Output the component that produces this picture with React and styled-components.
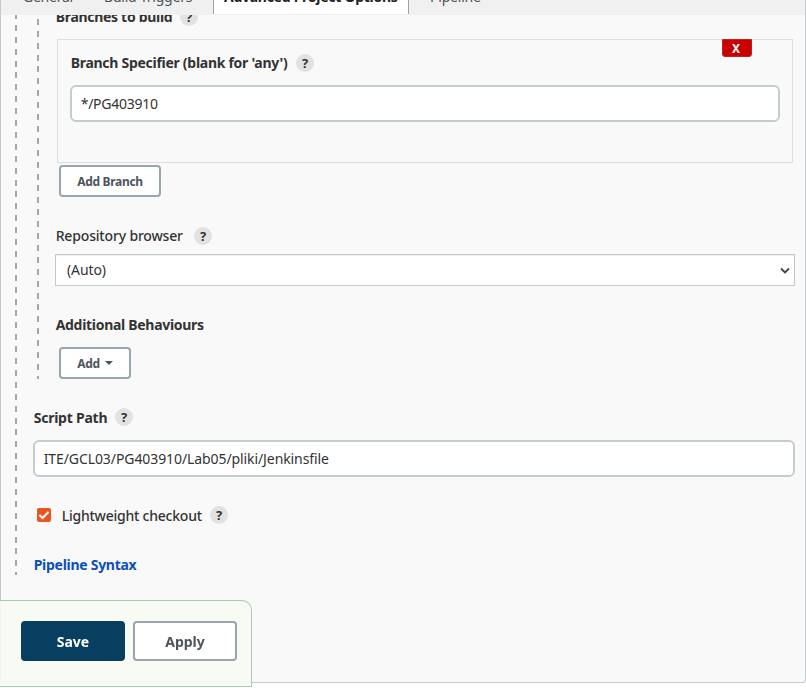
import React from "react";
import styled, { createGlobalStyle, css } from "styled-components";

const GlobalStyle = createGlobalStyle`
  *, *::before, *::after { box-sizing: border-box; }
  html, body { margin: 0; height: 688px; overflow: hidden; background: #fff; }
  body, button, input { font-family: "Noto Sans", "Open Sans", sans-serif; font-size: 14px; color: #333; }
`;

const Page = styled.div`
  height: 688px;
  overflow: hidden;
`;

const Panel = styled.main`
  height: 683px;
  border: 1px solid #bfcad1;
  border-top: 0;
  border-radius: 0 0 4px 4px;
  background: #f9f9f9;
`;

const Tabs = styled.nav`
  position: relative;
  z-index: 1;
  display: flex;
  height: 15px;
  overflow: hidden;
  background: #f0f0f0;
`;

const Tab = styled.span`
  flex: none;
  width: ${(p) => p.$width}px;
  height: ${(p) => (p.$active ? 14 : 15)}px;
  padding-left: ${(p) => p.$pad}px;
  line-height: 20px;
  white-space: nowrap;
  letter-spacing: ${(p) => p.$track || 0}px;
  color: #4d545d;
  & > span { display: block; margin-top: -13px; }
  ${(p) => p.$active && css`
    background: #fff;
    border: solid #98a5ae;
    border-width: 0 1px;
    color: #222;
    font-weight: 700;
  `}
`;

const dashes = (start, length) => css`
  background: repeating-linear-gradient(#a6a6a6 0 6px, transparent 6px 11.9px) 0 ${start}px / 2px ${length}px no-repeat;
`;

const Outer = styled.section`
  margin: -14px 0 0 14px;
  height: 574px;
  padding: 0 10px 0 18px;
  ${dashes(12, 562)}
`;

const Inner = styled.section`
  margin-left: 4px;
  height: 378px;
  padding: 7px 0 0 18px;
  ${dashes(6, 372)}
`;

const Row = styled.div`
  display: flex;
  align-items: center;
  height: 18px;
  margin-top: ${(p) => p.$top || 0}px;
  margin-left: ${(p) => p.$left || 0}px;
`;

const Label = styled.label`
  flex: none;
  width: ${(p) => p.$width}px;
  padding: ${(p) => p.$drop || 0}px 0 0 0.7px;
  white-space: nowrap;
  line-height: 18px;
  font-weight: ${(p) => p.$weight || 700};
  letter-spacing: ${(p) => p.$track || 0}px;
`;

const HelpCircle = styled.span`
  flex: none;
  display: grid;
  place-items: center;
  width: 18px;
  height: 18px;
  border-radius: 50%;
  background: #e2e2e2;
  font-size: 13px;
  line-height: 18px;
  font-weight: 700;
`;

const Box = styled.div`
  position: relative;
  width: 736px;
  height: 124px;
  margin: 13px 0 0 2px;
  padding: 14px 12px 0;
  border: 1px solid #dcdfe0;
`;

const Delete = styled.button`
  position: absolute;
  top: -1px;
  right: 40px;
  width: 30px;
  height: 18px;
  padding: 1px 2px 0 0;
  border: 1px solid #b9261e;
  border-radius: 0 0 3px 3px;
  background: #c00;
  color: #fff;
  font: 700 12px/16px "Noto Sans", sans-serif;
`;

const Field = styled.input`
  display: block;
  width: 100%;
  height: 37px;
  margin-top: ${(p) => p.$top}px;
  padding: 0 8.7px;
  border: 2px solid #c3cdd1;
  border-radius: 6px;
  background: #fff;
  letter-spacing: ${(p) => p.$track}px;
  outline: 0;
`;

const Button = styled.button`
  display: flex;
  align-items: center;
  justify-content: center;
  gap: 5px;
  width: ${(p) => p.$width}px;
  height: ${(p) => (p.$large ? 40 : 32)}px;
  margin: ${(p) => p.$margin || 0};
  padding: 0;
  border: 2px solid ${(p) => (p.$primary ? "#083f61" : "#98a6ae")};
  border-radius: 4px;
  background: ${(p) => (p.$primary ? "#083f61" : "#fff")};
  color: ${(p) => (p.$primary ? "#fff" : "#4d545d")};
  font-weight: 700;
  font-size: ${(p) => (p.$large ? 14 : 12)}px;
  letter-spacing: ${(p) => p.$track || 0}px;
  white-space: nowrap;
`;

const Select = styled.div`
  display: flex;
  align-items: center;
  justify-content: space-between;
  width: 740px;
  height: 32px;
  margin-top: 9px;
  padding: 0 4px 0 11px;
  border: 1px solid #bfcacf;
  background: #fff;
  box-shadow: inset 0 1px 1px rgba(0, 0, 0, 0.07);
  letter-spacing: -0.1px;
  & > span { padding-bottom: 2px; }
  & > svg { margin-top: 1px; }
`;

const Check = styled.span`
  display: grid;
  place-items: center;
  width: 14px;
  height: 14px;
  margin-right: 10px;
  border-radius: 2px;
  background: #e95420;
`;

const Link = styled.a`
  display: block;
  margin-top: 32px;
  padding-left: 0.7px;
  line-height: 18px;
  font-weight: 700;
  color: #0b50b8;
  letter-spacing: -0.28px;
`;

const Footer = styled.footer`
  position: fixed;
  left: 0;
  top: 600px;
  display: flex;
  gap: 8px;
  width: 252px;
  height: 87px;
  padding: 20px 0 0 21px;
  border: 1px solid #a5cbb5;
  border-left: 0;
  border-radius: 0 10px 0 0;
  background: rgba(247, 251, 243, 0.9);
`;

const Help = () => <HelpCircle>?</HelpCircle>;

export default function App() {
  return (
    <Page>
      <GlobalStyle />
      <Panel>
        <Tabs>
          <Tab $width={82} $pad={22} $track={-0.25}><span>General</span></Tab>
          <Tab $width={130} $pad={21} $track={-0.22}><span>Build Triggers</span></Tab>
          <Tab $width={196} $pad={10} $active $track={-0.27}><span>Advanced Project Options</span></Tab>
          <Tab $width={100} $pad={21} $track={-0.2}><span>Pipeline</span></Tab>
        </Tabs>
        <Outer>
          <Inner>
            <Row><Label $width={125} $track={-0.3}>Branches to build</Label><Help /></Row>
            <Box>
              <Delete>X</Delete>
              <Row><Label $width={226} $track={-0.28}>Branch Specifier (blank for 'any')</Label><Help /></Row>
              <Field $top={13} $track={-0.25} defaultValue="*/PG403910" />
            </Box>
            <Button $width={102} $margin="2px 0 0 4px" $track={-0.3}>Add Branch</Button>
            <Row $top={30}><Label $width={139} $weight={500} $track={-0.17}>Repository browser</Label><Help /></Row>
            <Select>
              <span>(Auto)</span>
              <svg width="10" height="8" viewBox="0 0 10 8" fill="none" stroke="#444" strokeWidth="1.8">
                <path d="M1 1.5 5 5.5 9 1.5" />
              </svg>
            </Select>
            <Row $top={30}><Label $width={160} $track={-0.3}>Additional Behaviours</Label></Row>
            <Button $width={72} $margin="13px 0 0 4px" $track={-0.3}>
              Add
              <svg width="8" height="4" viewBox="0 0 8 4"><path d="M0 0h8L4 4z" fill="#4d545d" /></svg>
            </Button>
          </Inner>
          <Row $top={29}><Label $width={82} $track={-0.24} $drop={2}>Script Path</Label><Help /></Row>
          <Field $top={14} $track={-0.09} defaultValue="ITE/GCL03/PG403910/Lab05/pliki/Jenkinsfile" />
          <Row $top={29} $left={4}>
            <Check>
              <svg width="12" height="12" viewBox="0 0 12 12" fill="none" stroke="#fff" strokeWidth="2">
                <path d="M1.5 6 4.5 9 10.5 3" />
              </svg>
            </Check>
            <Label $width={149} $weight={500} $track={-0.23} $drop={2}>Lightweight checkout</Label><Help />
          </Row>
          <Link>Pipeline Syntax</Link>
        </Outer>
      </Panel>
      <Footer>
        <Button $large $primary $width={104}>Save</Button>
        <Button $large $width={104}>Apply</Button>
      </Footer>
    </Page>
  );
}
